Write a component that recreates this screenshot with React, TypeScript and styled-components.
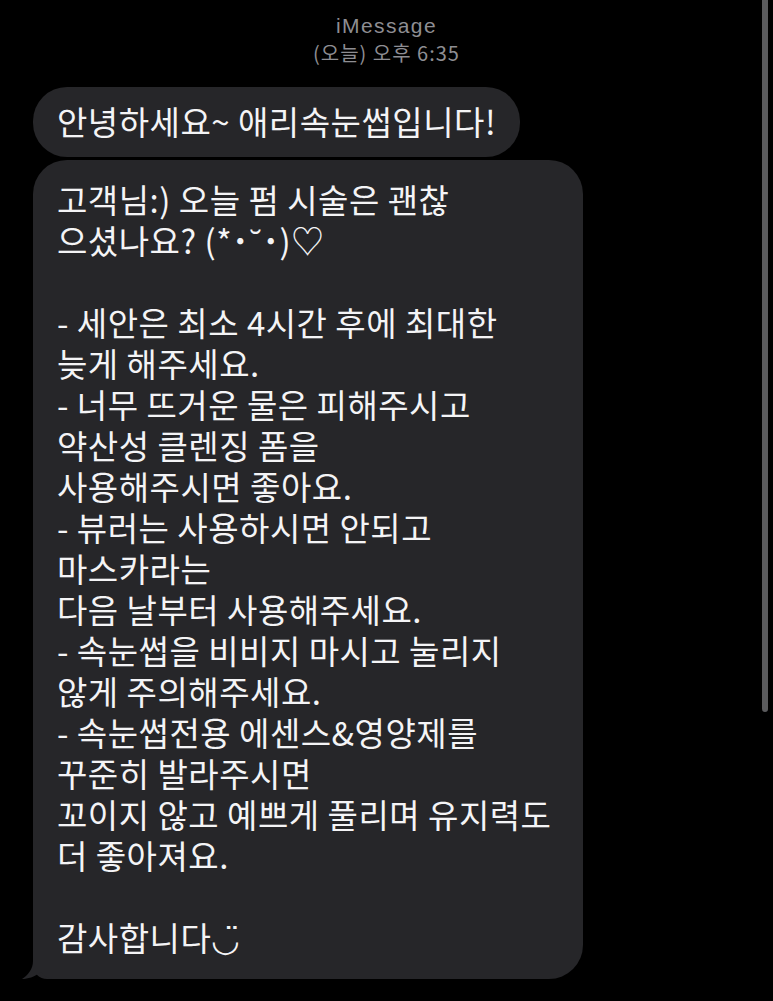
import React from 'react';
import styled, { createGlobalStyle } from 'styled-components';

const GlobalStyle = createGlobalStyle`
  html, body {
    margin: 0;
    padding: 0;
    background: #000;
  }
  body {
    font-family: "Noto Sans CJK KR", "Noto Sans", sans-serif;
    -webkit-font-smoothing: antialiased;
  }
`;

const Screen = styled.div`
  position: relative;
  width: 773px;
  height: 1001px;
  background: #000;
  overflow: hidden;
  display: flex;
  flex-direction: column;
`;

const Header = styled.div`
  display: flex;
  flex-direction: column;
  align-items: center;
  gap: 3px;
  padding-top: 14px;
  color: #8e8e93;
`;

const HeaderLine = styled.span<{ $latin?: boolean }>`
  display: block;
  height: 24px;
  line-height: 24px;
  font-family: ${p => (p.$latin ? '"Liberation Sans", Arial, sans-serif' : '"Noto Sans CJK KR", sans-serif')};
  font-size: ${p => (p.$latin ? '21px' : '20px')};
  letter-spacing: ${p => (p.$latin ? '1.4px' : '1px')};
`;

const Thread = styled.div`
  display: flex;
  flex-direction: column;
  align-items: flex-start;
  gap: 3px;
  padding: 22px 0 0 33px;
`;

const Bubble = styled.div<{ $tail?: boolean }>`
  position: relative;
  background: #262629;
  color: #f4f4f6;
  font-size: 33px;
  line-height: 41px;
  letter-spacing: 0.5px;
  border-radius: 34px;
  border-bottom-left-radius: ${p => (p.$tail ? '14px' : '34px')};
  padding: ${p => (p.$tail ? '19px 24px 21px 24px' : '14px 24px 15px 24px')};
  white-space: pre;
  width: ${p => (p.$tail ? '502px' : 'auto')};
`;

const Tail = styled.svg`
  position: absolute;
  left: -11px;
  bottom: 0;
`;

const ScrollThumb = styled.div`
  position: absolute;
  right: 5px;
  top: 0;
  width: 6px;
  height: 712px;
  background: #5b5b5d;
  border-radius: 0 0 3px 3px;
`;

const longText = `고객님:) 오늘 펌 시술은 괜찮
으셨나요? (*˙˘˙)♡

- 세안은 최소 4시간 후에 최대한
늦게 해주세요.
- 너무 뜨거운 물은 피해주시고
약산성 클렌징 폼을
사용해주시면 좋아요.
- 뷰러는 사용하시면 안되고
마스카라는
다음 날부터 사용해주세요.
- 속눈썹을 비비지 마시고 눌리지
않게 주의해주세요.
- 속눈썹전용 에센스&영양제를
꾸준히 발라주시면
꼬이지 않고 예쁘게 풀리며 유지력도
더 좋아져요.

감사합니다◡̈`;

export default function App() {
  return (
    <>
      <GlobalStyle />
      <Screen>
        <Header>
          <HeaderLine $latin>iMessage</HeaderLine>
          <HeaderLine>(오늘) 오후 6:35</HeaderLine>
        </Header>
        <Thread>
          <Bubble>안녕하세요~ 애리속눈썹입니다!</Bubble>
          <Bubble $tail>
            <Tail width="30" height="26" viewBox="0 0 30 26">
              <path
                d="M11 0 L11 8 C11 16, 6 22, 0 26 C6 26, 12 24, 19 19 C23 23, 26 26, 30 26 L30 0 Z"
                fill="#262629"
              />
            </Tail>
            {longText}
          </Bubble>
        </Thread>
        <ScrollThumb />
      </Screen>
    </>
  );
}
